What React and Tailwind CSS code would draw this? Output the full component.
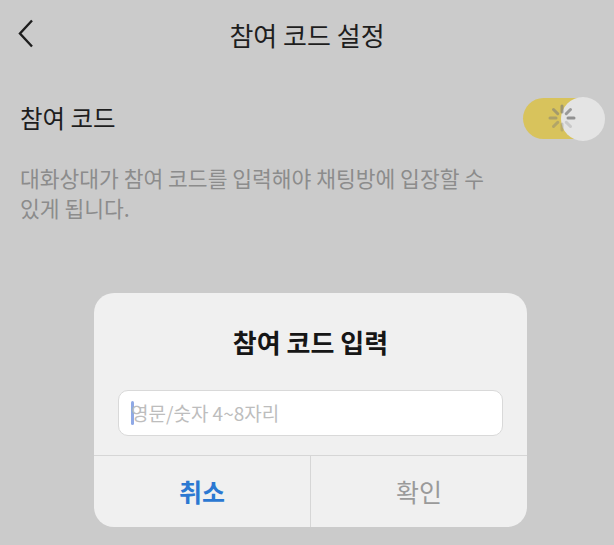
import React from 'react';

const font = { fontFamily: '"Noto Sans CJK KR", "Noto Sans", sans-serif' };

const Spinner = () => {
  const ticks = Array.from({ length: 8 }, (_, i) => i);
  return (
    <svg width="30" height="30" viewBox="-15 -15 30 30">
      {ticks.map((i) => (
        <line
          key={i}
          x1="0"
          y1="-6"
          x2="0"
          y2="-12"
          stroke="#7a7a7a"
          strokeWidth="3"
          strokeLinecap="round"
          opacity={0.25 + (i / 8) * 0.6}
          transform={`rotate(${i * 45 + 135})`}
        />
      ))}
    </svg>
  );
};

const App = () => {
  return (
    <div className="relative w-[614px] h-[545px] bg-[#cbcbcb] overflow-hidden" style={font}>
      <header className="relative h-[70px] flex items-center justify-center">
        <svg className="absolute left-[17px] top-[19px]" width="18" height="29" viewBox="0 0 18 29">
          <path d="M15 1.5 L3 14.5 L15 27.5" fill="none" stroke="#1e1e1e" strokeWidth="2.4" />
        </svg>
        <h1 className="text-[26px] text-[#1e1e1e] leading-none">참여 코드 설정</h1>
      </header>

      <section className="px-5 pt-[28px]">
        <div className="flex items-center justify-between">
          <span className="text-[24.5px] text-[#1e1e1e] leading-none">참여 코드</span>
          <div className="relative w-[81px] h-[41px] rounded-full bg-[#d8c35c] mr-[-10px] flex items-center justify-end">
            <div className="w-[44px] h-[44px] rounded-full bg-[#e4e4e4] -mr-px"></div>
            <div className="absolute left-[24px] top-[5px]">
              <Spinner />
            </div>
          </div>
        </div>
        <p className="mt-[24px] text-[21.5px] leading-[30px] text-[#8c8c8c]">
          대화상대가 참여 코드를 입력해야 채팅방에 입장할 수
          <br />
          있게 됩니다.
        </p>
      </section>

      <div className="absolute left-[94px] top-[293px] w-[433px] h-[234px] rounded-[20px] bg-[#f0f0f0] flex flex-col">
        <h2 className="pt-[36px] text-center text-[26px] font-semibold text-[#161616] leading-none">참여 코드 입력</h2>
        <div className="mx-[24px] mt-[35px] h-[46px] rounded-[10px] bg-white border border-[#d9d9d9] flex items-center pl-[12px]">
          <span className="w-[3px] h-[24px] bg-[#8fa9e6] rounded-sm"></span>
          <span className="text-[19px] text-[#bdbdbd] -ml-[3px]">영문/숫자 4~8자리</span>
        </div>
        <div className="mt-auto h-[72px] border-t border-[#d6d6d6] flex">
          <button className="flex-1 border-r border-[#d6d6d6] text-[25px] font-semibold text-[#2b78d2]">취소</button>
          <button className="flex-1 text-[25px] text-[#9a9a9a]">확인</button>
        </div>
      </div>
    </div>
  );
};

export default App;
